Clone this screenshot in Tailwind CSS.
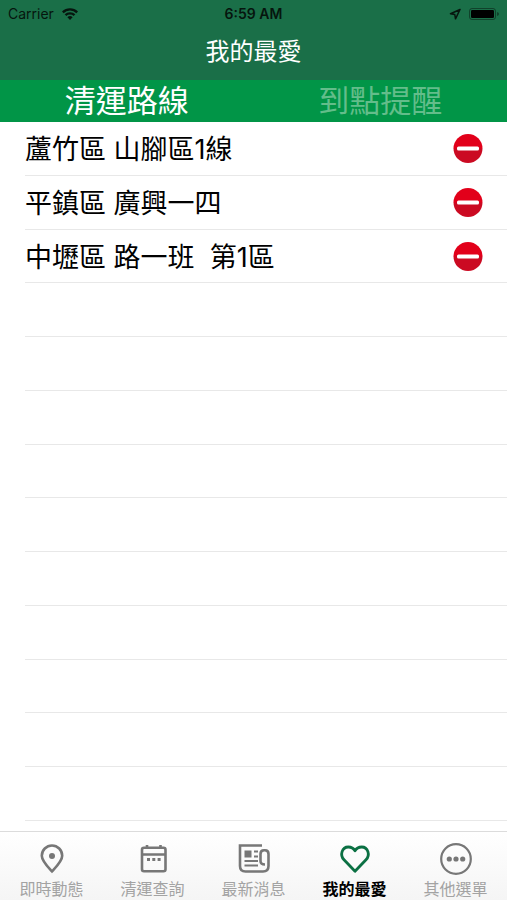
<!DOCTYPE html>
<html lang="zh-Hant">
<head>
  <meta charset="UTF-8" />
  <meta name="viewport" content="width=device-width, initial-scale=1.0"/>
  <title>我的最愛</title>
  <script src="https://cdn.jsdelivr.net/npm/@tailwindcss/browser@4"></script>
</head>

<body class="min-h-screen flex flex-col bg-white text-black font-[Inter,'Noto_Sans_CJK_TC',sans-serif]">

  <!-- Header -->
  <header class="bg-[#1a6f48]">
    <div class="grid grid-cols-3 items-center h-7 px-2 text-[#06150e]">
      <div class="flex items-center gap-2 text-sm">
        <span>Carrier</span>
        <svg class="w-4 h-3" viewBox="0 0 16 12" fill="none" stroke="currentColor" stroke-width="2.4">
          <path d="M.8 4.3a10.4 10.4 0 0 1 14.4 0"/>
          <path d="M3.5 7.2a6.5 6.5 0 0 1 9 0"/>
          <path d="M5.4 9.2a3.8 3.8 0 0 1 5.2 0L8 12z" fill="currentColor" stroke="none"/>
        </svg>
      </div>
      <span class="text-center text-sm font-semibold">6:59 AM</span>
      <div class="flex items-center justify-end gap-2">
        <svg class="w-3 h-3" viewBox="0 0 12 12" fill="none" stroke="currentColor" stroke-width="1.5" stroke-linejoin="round">
          <path d="M11 1.500 1.500 5.700l4.300.8.700 4.300z"/>
        </svg>
        <svg class="w-[30px] h-3" viewBox="0 0 30 12">
          <rect x=".5" y=".5" width="26" height="11" rx="2.5" fill="none" stroke="currentColor" stroke-opacity=".5"/>
          <rect x="2" y="2" width="23" height="8" rx="1.2" fill="#000"/>
          <path d="M28 4v4q2-.6 2-2t-2-2z" fill="currentColor" fill-opacity=".5"/>
        </svg>
      </div>
    </div>
    <h1 class="h-[52px] text-center text-2xl leading-12 text-white">我的最愛</h1>
  </header>

  <!-- Segments -->
  <div class="grid grid-cols-2 h-[42px] bg-[#019547] text-[31px] leading-[42px]">
    <button type="button" class="text-white">清運路線</button>
    <button type="button" class="text-[#63bd8a]">到點提醒</button>
  </div>

  <!-- Favourite routes, padded with blank rows like a native list -->
  <main class="flex-1 flex flex-col pb-[10px]">
    <ul id="routes" class="flex-1 grid auto-rows-fr"></ul>
  </main>

  <!-- Bottom tabs -->
  <nav class="grid grid-cols-5 h-[69px] px-px border-t border-[#dcdcdc] bg-linear-to-b from-white to-[#f5f5f5] text-base leading-7 text-[#a3a3a3]">
    <a href="#" class="flex flex-col items-center pt-[11px]">
      <svg class="w-8 h-8 text-[#777]" viewBox="0 0 32 32" fill="none" stroke="currentColor" stroke-width="2.6">
        <path d="M16 28.4C12 24 5.8 18 5.8 12.7a10.2 10.2 0 0 1 20.4 0C26.2 18 20 24 16 28.4z"/>
        <circle cx="16" cy="13" r="3" fill="currentColor" stroke="none"/>
      </svg>
      <span>即時動態</span>
    </a>
    <a href="#" class="flex flex-col items-center pt-[11px]">
      <svg class="w-8 h-8 text-[#777]" viewBox="0 0 32 32" fill="none" stroke="currentColor" stroke-width="2.6">
        <rect x="5" y="4.8" width="23.5" height="23.5" rx="2"/>
        <path d="M5 11.5h23.5M10 2v4M23.5 2v4"/>
        <path d="M10 16.5h3M15.3 16.5h3M20.6 16.5h3" stroke-width="3"/>
      </svg>
      <span>清運查詢</span>
    </a>
    <a href="#" class="flex flex-col items-center pt-[11px]">
      <svg class="w-8 h-8 text-[#777]" viewBox="0 0 32 32" fill="none" stroke="currentColor" stroke-width="2.6">
        <path d="M24 2.500H2V23q0 5.500 5.500 5.500h17.500q5.500 0 5.500-5.500V11q0-3.800-3.500-3.800h-1q-3.500 0-3.500 3.800v7q0 3.500 4.500 3.500"/>
        <rect x="6.500" y="7.500" width="7" height="7" fill="currentColor" stroke="none"/>
        <path d="M16 8.500h4M16 13.500h4M6.500 18h13.500M6.500 22.500h13.500" stroke-width="2"/>
      </svg>
      <span>最新消息</span>
    </a>
    <a href="#" aria-current="page" class="flex flex-col items-center pt-[11px] font-bold text-black">
      <svg class="w-8 h-8 text-[#0b7043]" viewBox="0 0 32 32" fill="none" stroke="currentColor" stroke-width="2.8" stroke-linejoin="round">
        <path d="M16 28.3 5 16.8C.5 12 3 4 9.3 4 12.5 4 15 6 16 7.8 17 6 19.5 4 22.7 4 29 4 31.5 12 27 16.8z"/>
      </svg>
      <span>我的最愛</span>
    </a>
    <a href="#" class="flex flex-col items-center pt-[11px]">
      <svg class="w-8 h-8 text-[#777]" viewBox="0 0 32 32" fill="currentColor">
        <circle cx="16" cy="16" r="14.8" fill="none" stroke="currentColor" stroke-width="2.2"/>
        <circle cx="9.3" cy="16" r="2.6"/>
        <circle cx="16" cy="16" r="2.6"/>
        <circle cx="22.7" cy="16" r="2.6"/>
      </svg>
      <span>其他選單</span>
    </a>
  </nav>

  <script>
    const routes = ['蘆竹區 山腳區1線', '平鎮區 廣興一四', '中壢區 路一班  第1區'];
    const TOTAL_ROWS = 13;
    const list = document.getElementById('routes');

    for (let i = 0; i < TOTAL_ROWS; i++) {
      const row = document.createElement('li');
      row.className = 'ml-[25px] pr-6 flex items-center justify-between border-b border-[#e8e8e8]';
      if (routes[i]) {
        row.innerHTML = `
          <span class="pt-1 text-[27px] leading-10 whitespace-pre">${routes[i]}</span>
          <button type="button" aria-label="移除 ${routes[i]}">
            <svg class="w-[30px] h-[30px]" viewBox="0 0 30 30">
              <defs>
                <linearGradient id="red${i}" x1="0" y1="0" x2="0" y2="1">
                  <stop offset=".48" stop-color="#e2001a"/>
                  <stop offset=".52" stop-color="#cb0a22"/>
                </linearGradient>
              </defs>
              <circle cx="15" cy="15.5" r="14.5" fill="url(#red${i})"/>
              <rect x="4" y="13.5" width="22" height="4" rx="1.5" fill="#fff"/>
            </svg>
          </button>`;
      } else {
        row.setAttribute('aria-hidden', 'true');
      }
      list.appendChild(row);
    }
  </script>

</body>
</html>
